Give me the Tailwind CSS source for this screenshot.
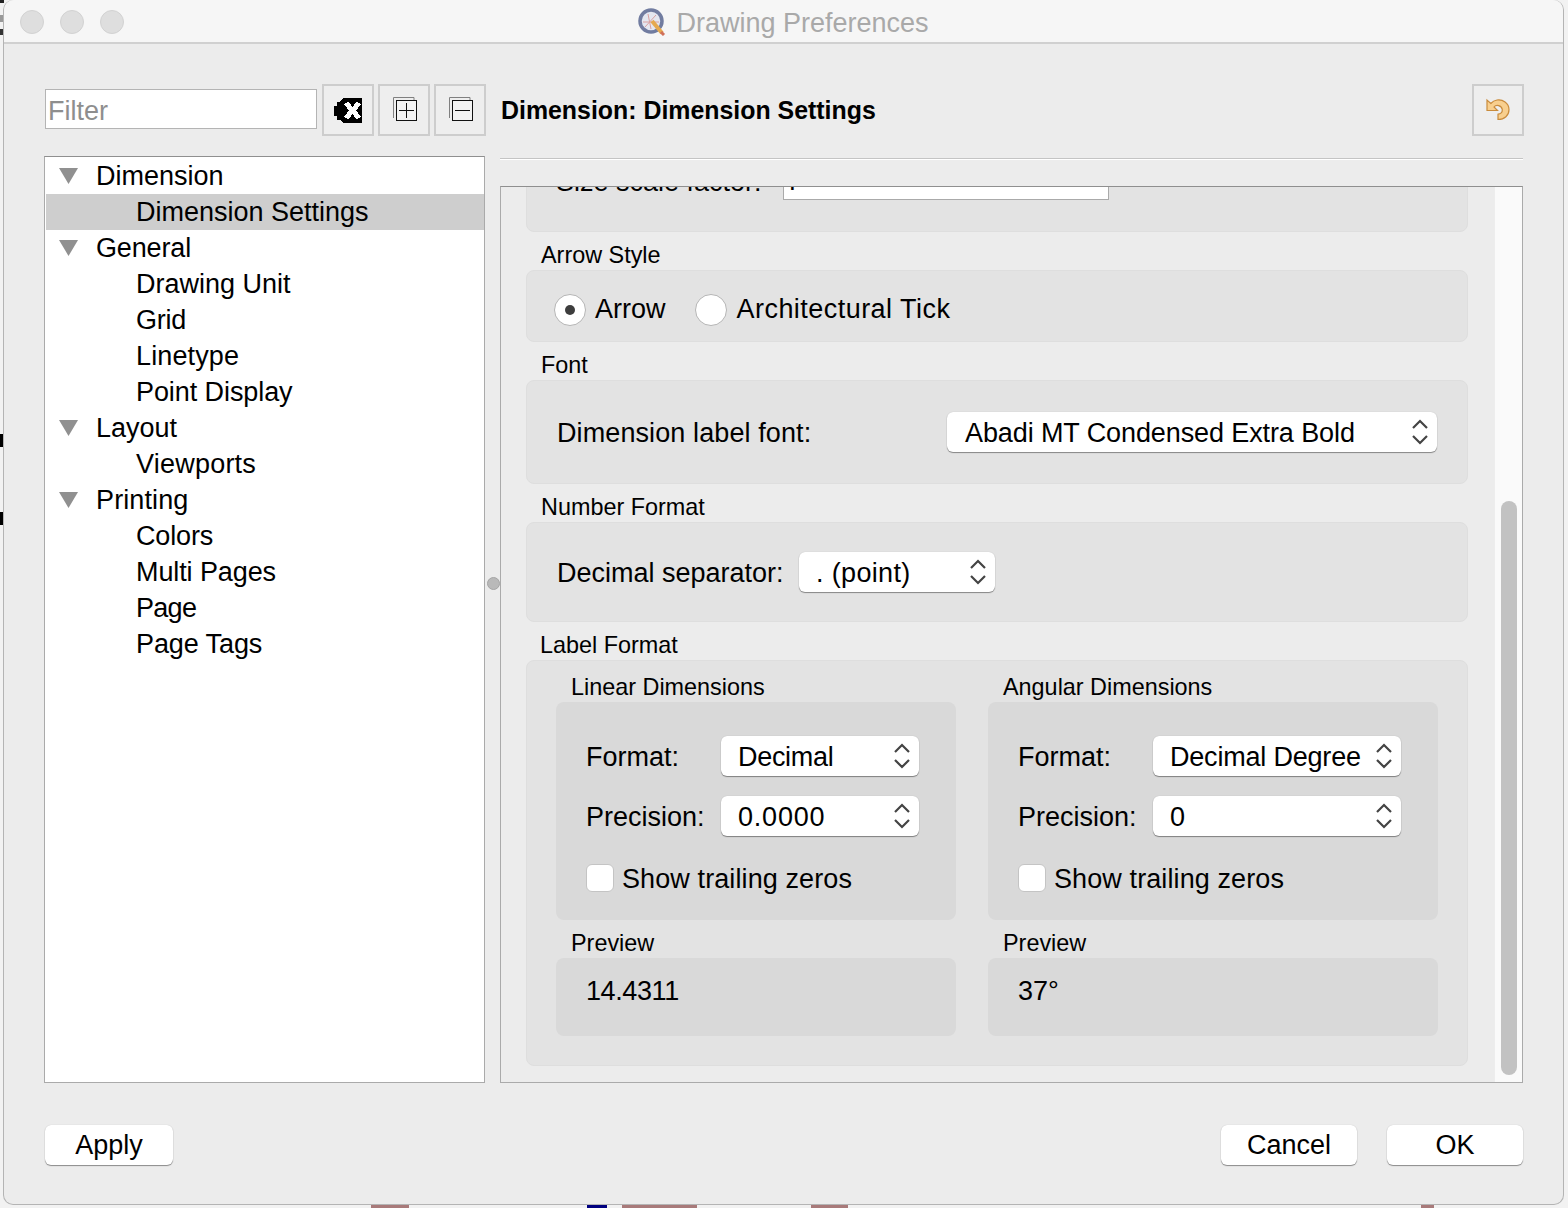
<!doctype html>
<html><head><meta charset="utf-8"><script src="https://cdn.jsdelivr.net/npm/@tailwindcss/browser@4"></script></head>
<body class="m-0">
<div class="relative w-[1568px] h-[1208px] overflow-hidden bg-[#f2f2f2] text-black text-[27px] leading-[36px] font-['Liberation_Sans',Arial,sans-serif]">
  <div class="absolute left-0 top-0 w-[4px] h-[3px] bg-[#222222]"></div>
  <div class="absolute left-0 top-[15px] w-[3px] h-[7px] bg-[#999999]"></div>
  <div class="absolute left-0 top-[29px] w-[3px] h-[6px] bg-[#333333]"></div>
  <div class="absolute left-0 top-[434px] w-[4px] h-[13px] bg-black"></div>
  <div class="absolute left-0 top-[512px] w-[4px] h-[13px] bg-black"></div>
  <div class="absolute left-[371px] top-[1200px] w-[38px] h-[8px] bg-[#a87a7a]"></div>
  <div class="absolute left-[587px] top-[1200px] w-[20px] h-[8px] bg-[#00007f]"></div>
  <div class="absolute left-[622px] top-[1200px] w-[75px] h-[8px] bg-[#a87a7a]"></div>
  <div class="absolute left-[811px] top-[1200px] w-[37px] h-[8px] bg-[#a87a7a]"></div>
  <div class="absolute left-[1421px] top-[1200px] w-[13px] h-[8px] bg-[#a87a7a]"></div>

  <div class="relative ml-[3px] w-[1561px] h-[1205px] rounded-[10px] bg-[#ececec] border-x border-b border-[#b4b4b4] flex flex-col">
    <!-- Title bar -->
    <div class="h-[44px] shrink-0 rounded-t-[10px] bg-[#f6f6f6] border-b-2 border-[#d0d0d0] grid grid-cols-[1fr_auto_1fr] items-center">
      <div class="flex gap-[16px] pl-[16px] pt-[2px]">
        <span class="w-[24px] h-[24px] rounded-full bg-[#dedede] border border-[#d2d2d2]"></span>
        <span class="w-[24px] h-[24px] rounded-full bg-[#dedede] border border-[#d2d2d2]"></span>
        <span class="w-[24px] h-[24px] rounded-full bg-[#dedede] border border-[#d2d2d2]"></span>
      </div>
      <div class="flex items-center gap-[10px] text-[#a9a9a9] pt-[4px]">
        <svg width="28" height="28" viewBox="0 0 28 28" class="-mt-[2px]">
          <circle cx="13" cy="13" r="11" fill="#e4e7f0" stroke="#717ca0" stroke-width="3.5"/>
          <path d="M5 14H21M10 6L13 21M7 19L18 7" stroke="#d9a0a0" stroke-width="1" fill="none"/>
          <path d="M14 13L24 25" stroke="#e6a94f" stroke-width="4"/>
          <path d="M23 24l3 3" stroke="#d0705a" stroke-width="3"/>
        </svg>
        <span>Drawing Preferences</span>
      </div>
      <div></div>
    </div>

    <div class="flex-1 flex flex-col pl-[41px] pr-[40px] pt-[40px]">
      <!-- Toolbar -->
      <div class="h-[52px] flex items-center">
        <div class="w-[272px] h-[40px] -mt-[2px] bg-white border border-[#b4b4b4] flex items-center pl-[2px] pt-[4px] text-[#8e8e8e]">Filter</div>
        <button class="ml-[5px] w-[52px] h-[52px] border-2 border-[#cdcdcd] bg-[#eeeeee] flex items-center justify-center">
          <svg width="30" height="27" viewBox="0 0 30 27" shape-rendering="crispEdges"><path d="M10 1H29V26H10L7 23H4V19H1V9H4V5H7Z" fill="#000"/><path d="M13 6L26 21M26 6L13 21" stroke="#fff" stroke-width="5"/></svg>
        </button>
        <button class="ml-[4px] w-[52px] h-[52px] border-2 border-[#cdcdcd] bg-[#eeeeee] flex items-center justify-center">
          <svg width="26" height="26" viewBox="0 0 26 26" fill="none"><path d="M2.5 21V0.5H23V3" stroke="#808080"/><rect x="5.5" y="3.5" width="20" height="20" fill="#f3f3f3" stroke="#111"/><path d="M15.5 6V21M8 13.5H23" stroke="#111"/></svg>
        </button>
        <button class="ml-[4px] w-[52px] h-[52px] border-2 border-[#cdcdcd] bg-[#eeeeee] flex items-center justify-center">
          <svg width="26" height="26" viewBox="0 0 26 26" fill="none"><path d="M2.5 21V0.5H23V3" stroke="#808080"/><rect x="5.5" y="3.5" width="20" height="20" fill="#f3f3f3" stroke="#111"/><path d="M8 13.5H23" stroke="#111"/></svg>
        </button>
        <div class="ml-[15px] flex-1 font-bold text-[24.9px]">Dimension: Dimension Settings</div>
        <button class="-mr-[1px] w-[52px] h-[52px] border-2 border-[#cdcdcd] bg-[#eeeeee] flex items-center justify-center">
          <svg width="26" height="24" viewBox="0 0 26 24"><path d="M2 2V12.5H12.5L9 9C11 6.5 16.5 7 17.3 11.5C17.6 14.5 15.5 16 13 16.2V21.5C19.5 21.5 24 17.5 24 11.5C24 5 17.5 1 12 2C9.5 2.4 7.5 3.6 5.8 5.5Z" fill="#f8cf8e" stroke="#c98b3c" stroke-width="1.2"/></svg>
        </button>
      </div>

      <!-- Main -->
      <div class="mt-[20px] h-[927px] flex gap-[15px] relative">
        <div class="w-[442px] -ml-[1px] h-full bg-white border border-[#aaaaaa] border-t-[#8f8f8f] pt-[1px]">
          <div class="h-[36px] flex items-center"><svg class="ml-[14px] mr-[18px]" width="19" height="16" viewBox="0 0 19 16"><path d="M0 0H19L9.5 16Z" fill="#909090"/></svg><span>Dimension</span></div>
          <div class="h-[36px] flex items-center pl-[90px] ml-[1px] bg-[#cecece]">Dimension Settings</div>
          <div class="h-[36px] flex items-center"><svg class="ml-[14px] mr-[18px]" width="19" height="16" viewBox="0 0 19 16"><path d="M0 0H19L9.5 16Z" fill="#909090"/></svg><span class="tracking-[-0.15px]">General</span></div>
          <div class="h-[36px] flex items-center pl-[91px]">Drawing Unit</div>
          <div class="h-[36px] flex items-center pl-[91px] tracking-[-0.25px]">Grid</div>
          <div class="h-[36px] flex items-center pl-[91px] tracking-[0.12px]">Linetype</div>
          <div class="h-[36px] flex items-center pl-[91px] tracking-[-0.08px]">Point Display</div>
          <div class="h-[36px] flex items-center"><svg class="ml-[14px] mr-[18px]" width="19" height="16" viewBox="0 0 19 16"><path d="M0 0H19L9.5 16Z" fill="#909090"/></svg><span>Layout</span></div>
          <div class="h-[36px] flex items-center pl-[91px] tracking-[0.22px]">Viewports</div>
          <div class="h-[36px] flex items-center"><svg class="ml-[14px] mr-[18px]" width="19" height="16" viewBox="0 0 19 16"><path d="M0 0H19L9.5 16Z" fill="#909090"/></svg><span class="tracking-[0.12px]">Printing</span></div>
          <div class="h-[36px] flex items-center pl-[91px] tracking-[-0.15px]">Colors</div>
          <div class="h-[36px] flex items-center pl-[91px] tracking-[-0.1px]">Multi Pages</div>
          <div class="h-[36px] flex items-center pl-[91px] tracking-[-0.7px]">Page</div>
          <div class="h-[36px] flex items-center pl-[91px] tracking-[-0.1px]">Page Tags</div>
        </div>
        <div class="absolute left-[442px] top-[421px] w-[13px] h-[13px] rounded-full bg-[#b9b9b9] border border-[#a5a5a5]"></div>

        <div class="w-[1023px] flex flex-col pt-[2px]">
          <div class="h-[2px] bg-[#c4c4c4] border-b border-white shrink-0"></div>
          <div class="mt-[26px] flex-1 min-h-0 flex border border-[#aaaaaa] border-t-[#8f8f8f] overflow-hidden">
            <div class="w-[993px] h-full overflow-hidden pl-[25px]">
              <div class="w-[942px] h-[82px] -mt-[37px] bg-[#e3e3e3] rounded-lg border border-[#dedede] pt-[10px] flex items-start">
                <div class="ml-[29px] w-[227px] h-[40px] flex items-center pt-[2px]">Size scale factor:</div>
                <div class="w-[326px] h-[40px] -mt-[1px] bg-white border border-[#aaaaaa] flex items-center pl-[1px] pt-[2px] font-['Inter',sans-serif]">1</div>
              </div>
              <div class="h-[38px] flex items-end pb-[1px] pl-[15px] text-[23.4px] leading-[28px]">Arrow Style</div>
              <div class="w-[942px] h-[72px] bg-[#e3e3e3] rounded-lg border border-[#dedede] flex items-center pl-[27px] pt-[7px]">
                <span class="w-[32px] h-[32px] rounded-full bg-white border border-[#b5b5b5] flex items-center justify-center"><span class="w-[10px] h-[10px] rounded-full bg-[#3d3d3d]"></span></span>
                <span class="ml-[9px] pb-[2px]">Arrow</span>
                <span class="ml-[29px] w-[32px] h-[32px] rounded-full bg-white border border-[#b5b5b5]"></span>
                <span class="ml-[10px] pb-[2px] tracking-[0.46px]">Architectural Tick</span>
              </div>
              <div class="h-[38px] flex items-end pb-[1px] pl-[15px] text-[23.4px] leading-[28px]">Font</div>
              <div class="w-[942px] h-[104px] bg-[#e3e3e3] rounded-lg border border-[#dedede] flex items-center pl-[30px]">
                <span class="w-[390px] pt-[2px] tracking-[0.1px]">Dimension label font:</span>
                <div class="w-[490px] h-[40px] bg-white rounded-md shadow-[0_1px_1px_rgba(0,0,0,0.4),0_0_1px_rgba(0,0,0,0.2)] flex items-center justify-between pl-[18px] pr-[9px]"><span class="pt-[2px] tracking-[-0.1px]">Abadi MT Condensed Extra Bold</span><svg width="16" height="26" viewBox="0 0 16 26" fill="none" stroke="#444" stroke-width="2.2"><path d="M1 9L8 2L15 9M1 17L8 24L15 17"/></svg></div>
              </div>
              <div class="h-[38px] flex items-end pb-[1px] pl-[15px] text-[23.4px] leading-[28px]">Number Format</div>
              <div class="w-[942px] h-[100px] bg-[#e3e3e3] rounded-lg border border-[#dedede] flex items-center pl-[30px]">
                <span class="w-[242px] pt-[2px]">Decimal separator:</span>
                <div class="w-[196px] h-[40px] bg-white rounded-md shadow-[0_1px_1px_rgba(0,0,0,0.4),0_0_1px_rgba(0,0,0,0.2)] flex items-center justify-between pl-[17px] pr-[9px]"><span class="pt-[2px] tracking-[0.35px]">. (point)</span><svg width="16" height="26" viewBox="0 0 16 26" fill="none" stroke="#444" stroke-width="2.2"><path d="M1 9L8 2L15 9M1 17L8 24L15 17"/></svg></div>
              </div>
              <div class="h-[38px] flex items-end pb-[1px] pl-[14px] text-[23.4px] leading-[28px]">Label Format</div>
              <div class="w-[942px] h-[406px] bg-[#e3e3e3] rounded-lg border border-[#dedede] pl-[29px] flex gap-[32px]">
                <div class="w-[400px]">
                  <div class="h-[41px] flex items-end pb-[1px] pl-[15px] text-[23.4px] leading-[28px]">Linear Dimensions</div>
                  <div class="h-[218px] bg-[#d9d9d9] rounded-lg pl-[30px] pt-[34px]">
                    <div class="flex items-center h-[40px]"><span class="w-[135px] pt-[2px]">Format:</span><div class="w-[198px] h-[40px] bg-white rounded-md shadow-[0_1px_1px_rgba(0,0,0,0.4),0_0_1px_rgba(0,0,0,0.2)] flex items-center justify-between pl-[17px] pr-[9px]"><span class="pt-[2px] tracking-[-0.3px]">Decimal</span><svg width="16" height="26" viewBox="0 0 16 26" fill="none" stroke="#444" stroke-width="2.2"><path d="M1 9L8 2L15 9M1 17L8 24L15 17"/></svg></div></div>
                    <div class="flex items-center h-[40px] mt-[20px]"><span class="w-[135px] pt-[2px]">Precision:</span><div class="w-[198px] h-[40px] bg-white rounded-md shadow-[0_1px_1px_rgba(0,0,0,0.4),0_0_1px_rgba(0,0,0,0.2)] flex items-center justify-between pl-[17px] pr-[9px]"><span class="pt-[2px] tracking-[0.8px]">0.0000</span><svg width="16" height="26" viewBox="0 0 16 26" fill="none" stroke="#444" stroke-width="2.2"><path d="M1 9L8 2L15 9M1 17L8 24L15 17"/></svg></div></div>
                    <div class="flex items-center h-[28px] mt-[28px]"><span class="w-[28px] h-[28px] bg-white rounded-md border border-[#c4c4c4]"></span><span class="ml-[8px] pt-[2px] tracking-[0.1px]">Show trailing zeros</span></div>
                  </div>
                  <div class="h-[38px] flex items-end pb-[1px] pl-[15px] text-[23.4px] leading-[28px]">Preview</div>
                  <div class="h-[78px] bg-[#d9d9d9] rounded-lg pl-[30px] pt-[15px] tracking-[-0.4px]">14.4311</div>
                </div>
                <div class="w-[450px]">
                  <div class="h-[41px] flex items-end pb-[1px] pl-[15px] text-[23.4px] leading-[28px]">Angular Dimensions</div>
                  <div class="h-[218px] bg-[#d9d9d9] rounded-lg pl-[30px] pt-[34px]">
                    <div class="flex items-center h-[40px]"><span class="w-[135px] pt-[2px]">Format:</span><div class="w-[248px] h-[40px] bg-white rounded-md shadow-[0_1px_1px_rgba(0,0,0,0.4),0_0_1px_rgba(0,0,0,0.2)] flex items-center justify-between pl-[17px] pr-[9px]"><span class="pt-[2px] tracking-[-0.2px]">Decimal Degree</span><svg width="16" height="26" viewBox="0 0 16 26" fill="none" stroke="#444" stroke-width="2.2"><path d="M1 9L8 2L15 9M1 17L8 24L15 17"/></svg></div></div>
                    <div class="flex items-center h-[40px] mt-[20px]"><span class="w-[135px] pt-[2px]">Precision:</span><div class="w-[248px] h-[40px] bg-white rounded-md shadow-[0_1px_1px_rgba(0,0,0,0.4),0_0_1px_rgba(0,0,0,0.2)] flex items-center justify-between pl-[17px] pr-[9px]"><span class="pt-[2px]">0</span><svg width="16" height="26" viewBox="0 0 16 26" fill="none" stroke="#444" stroke-width="2.2"><path d="M1 9L8 2L15 9M1 17L8 24L15 17"/></svg></div></div>
                    <div class="flex items-center h-[28px] mt-[28px]"><span class="w-[28px] h-[28px] bg-white rounded-md border border-[#c4c4c4]"></span><span class="ml-[8px] pt-[2px] tracking-[0.1px]">Show trailing zeros</span></div>
                  </div>
                  <div class="h-[38px] flex items-end pb-[1px] pl-[15px] text-[23.4px] leading-[28px]">Preview</div>
                  <div class="h-[78px] bg-[#d9d9d9] rounded-lg pl-[30px] pt-[15px]">37°</div>
                </div>
              </div>
            </div>
            <div class="w-[28px] h-full bg-[#fafafa] pt-[314px] pl-[6px] border-l border-[#ededed]">
              <div class="w-[16px] h-[574px] rounded-full bg-[#c2c2c2]"></div>
            </div>
          </div>
        </div>
      </div>

      <!-- Footer -->
      <div class="mt-[42px] flex">
        <button class="w-[128px] h-[40px] bg-white rounded-md shadow-[0_1px_1px_rgba(0,0,0,0.4),0_0_1px_rgba(0,0,0,0.2)]">Apply</button>
        <button class="ml-auto w-[136px] h-[40px] bg-white rounded-md shadow-[0_1px_1px_rgba(0,0,0,0.4),0_0_1px_rgba(0,0,0,0.2)]">Cancel</button>
        <button class="ml-[30px] w-[136px] h-[40px] bg-white rounded-md shadow-[0_1px_1px_rgba(0,0,0,0.4),0_0_1px_rgba(0,0,0,0.2)]">OK</button>
      </div>
    </div>
  </div>
</div>
</body></html>
